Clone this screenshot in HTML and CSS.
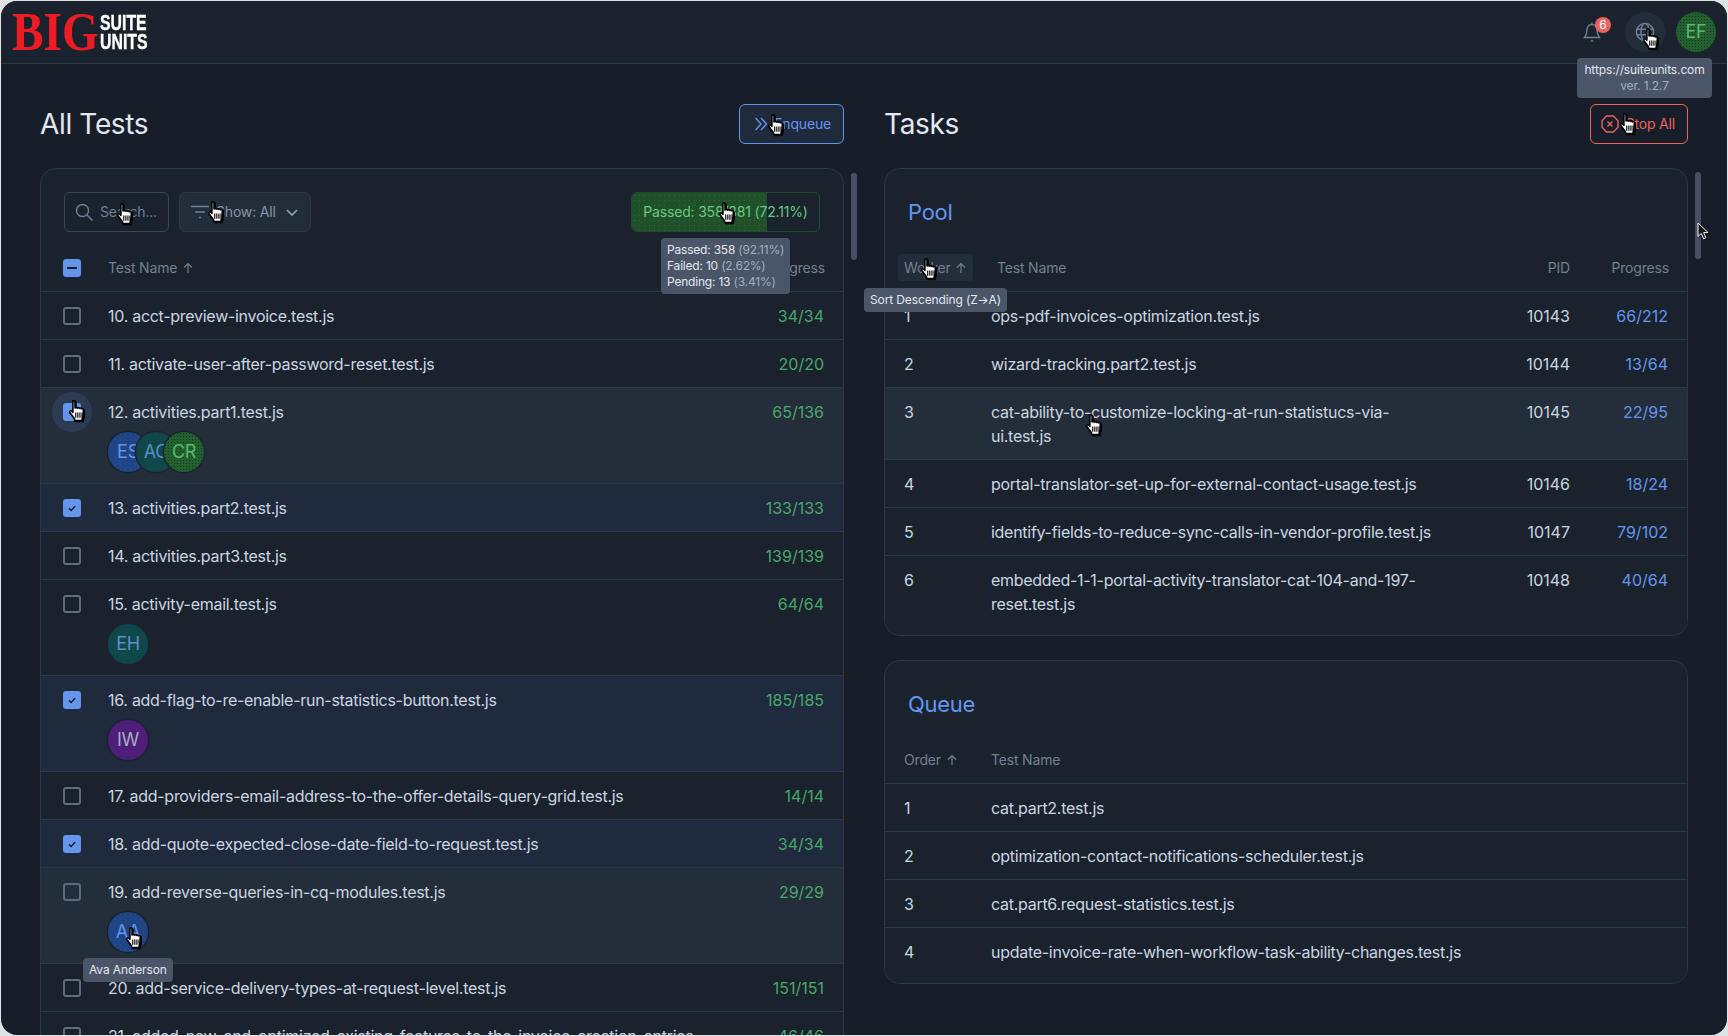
FILE: index.html
```html
<!DOCTYPE html>
<html lang="en">
<head>
<meta charset="utf-8">
<title>Big Suite Units</title>
<link rel="stylesheet" href="styles.css">
</head>
<body>
<svg class="defs" width="0" height="0" aria-hidden="true">
  <defs>
    <symbol id="hand" viewBox="0 0 17 21">
      <path d="M4.600 1.600c0-1.200 2-1.200 2 0v6.100c.2-1 1.900-1 2 .1.300-.9 1.900-.8 2 .3.400-.8 1.900-.6 2 .4.400-.6 1.900-.4 1.900.8v4.500c0 2-.6 2.900-1.100 4.200v1.600H6.200v-1.600C5 16.300 3.600 14.600 2 12.400.9 10.900 2.300 9.600 3.500 10.700l1.100 1.100z" fill="#fff" stroke="#000" stroke-width="1.500" stroke-linejoin="round"/>
      <path d="M7.300 12v5M9.300 12v5M11.300 12v5M13.300 12v5" stroke="#000" stroke-width="1.100"/>
    </symbol>
    <symbol id="up" viewBox="0 0 12 12">
      <path d="M6 11V1.500M2 5.500l4-4 4 4" fill="none" stroke="currentColor" stroke-width="1.200"/>
    </symbol>
    <symbol id="tick" viewBox="0 0 18 18">
      <path d="M5 9.500l3 2.800 5-6" fill="none" stroke="#1a202c" stroke-width="1.800"/>
    </symbol>
  </defs>
</svg>
<div class="window">
  <header class="topbar">
    <div class="logo">
      <span class="logo-big">BIG</span>
      <span class="logo-small"><span>SUITE</span><span>UNITS</span></span>
    </div>
    <div class="top-actions">
      <div class="bell">
        <svg width="20" height="24" viewBox="0 0 20 24" fill="none" stroke="#718096" stroke-width="1.400"><path d="M10 2.500v2M10 4.500c-3.200 0-5 2.600-5 5.500 0 4-1 5.500-2.500 7.500h15c-1.500-2-2.500-3.500-2.500-7.500 0-2.900-1.800-5.500-5-5.500z"/><path d="M8.800 21h2.400"/></svg>
        <span class="badge">6</span>
      </div>
      <div class="globe">
        <svg width="20" height="20" viewBox="0 0 22 22" fill="none" stroke="#718096" stroke-width="1.500"><circle cx="11" cy="11" r="9.500"/><ellipse cx="11" cy="11" rx="4.500" ry="9.500"/><path d="M2 8h18M2 14h18"/></svg>
      </div>
      <div class="avatar av-green dots-dark">EF</div>
    </div>
  </header>

  <main class="columns">
    <section class="column">
      <div class="col-head">
        <h1>All Tests</h1>
        <button class="btn btn-blue">
          <svg width="14" height="14" viewBox="0 0 14 14" fill="none" stroke="currentColor" stroke-width="1.400"><path d="M1.500 1L7 7l-5.500 6M7 1l5.500 6L7 13"/></svg>
          Enqueue
        </button>
      </div>
      <div class="panel">
        <div class="toolbar">
          <div class="search">
            <svg width="18" height="18" viewBox="0 0 18 18" fill="none" stroke="#718096" stroke-width="1.400"><circle cx="7.500" cy="7.500" r="6"/><path d="M12 12l5.500 5.500"/></svg>
            <span>Search...</span>
          </div>
          <div class="filter">
            <svg width="18" height="14" viewBox="0 0 18 14" fill="none" stroke="#718096" stroke-width="1.400"><path d="M0 1.500h18M4 7h10M8 12.500h2"/></svg>
            <span>Show: All</span>
            <svg width="14" height="14" viewBox="0 0 14 14" fill="none" stroke="#a0aec0" stroke-width="1.500"><path d="M2 5l5 5 5-5"/></svg>
          </div>
          <div class="stat">
            <div class="stat-fill" style="width:72.11%"></div>
            <span class="stat-text">Passed: 358/381 (72.11%)</span>
          </div>
        </div>
        <div class="thead thead-tests">
          <span class="check on"><i class="minus"></i></span>
          <span class="th">Test Name <svg class="up" width="12" height="12"><use href="#up"/></svg></span>
          <span class="th th-right">Progress</span>
        </div>
        <div class="row row-tests"><span class="check"></span><div class="cell-name">10. acct-preview-invoice.test.js</div><span class="done">34/34</span></div>
        <div class="row row-tests"><span class="check"></span><div class="cell-name">11. activate-user-after-password-reset.test.js</div><span class="done">20/20</span></div>
        <div class="row row-tests hover">
          <span class="check on halo"><svg width="16" height="16"><use href="#tick"/></svg></span>
          <div class="cell-name">12. activities.part1.test.js
            <div class="avatars"><span class="avatar av-blue dots-light">ES</span><span class="avatar av-teal">AC</span><span class="avatar av-green dots-dark">CR</span></div>
          </div>
          <span class="done">65/136</span>
        </div>
        <div class="row row-tests selected"><span class="check on"><svg width="16" height="16"><use href="#tick"/></svg></span><div class="cell-name">13. activities.part2.test.js</div><span class="done">133/133</span></div>
        <div class="row row-tests"><span class="check"></span><div class="cell-name">14. activities.part3.test.js</div><span class="done">139/139</span></div>
        <div class="row row-tests"><span class="check"></span>
          <div class="cell-name">15. activity-email.test.js
            <div class="avatars"><span class="avatar av-teal">EH</span></div>
          </div>
          <span class="done">64/64</span>
        </div>
        <div class="row row-tests selected"><span class="check on"><svg width="16" height="16"><use href="#tick"/></svg></span>
          <div class="cell-name">16. add-flag-to-re-enable-run-statistics-button.test.js
            <div class="avatars"><span class="avatar av-purple">IW</span></div>
          </div>
          <span class="done">185/185</span>
        </div>
        <div class="row row-tests"><span class="check"></span><div class="cell-name">17. add-providers-email-address-to-the-offer-details-query-grid.test.js</div><span class="done">14/14</span></div>
        <div class="row row-tests selected"><span class="check on"><svg width="16" height="16"><use href="#tick"/></svg></span><div class="cell-name">18. add-quote-expected-close-date-field-to-request.test.js</div><span class="done">34/34</span></div>
        <div class="row row-tests hover"><span class="check"></span>
          <div class="cell-name">19. add-reverse-queries-in-cq-modules.test.js
            <div class="avatars"><span class="avatar av-blue dots-light">AA</span></div>
          </div>
          <span class="done">29/29</span>
        </div>
        <div class="row row-tests"><span class="check"></span><div class="cell-name">20. add-service-delivery-types-at-request-level.test.js</div><span class="done">151/151</span></div>
        <div class="row row-tests"><span class="check"></span><div class="cell-name">21. added-new-and-optimized-existing-features-to-the-invoice-creation-entries</div><span class="done">46/46</span></div>
      </div>
    </section>

    <section class="column">
      <div class="col-head">
        <h1>Tasks</h1>
        <button class="btn btn-red">
          <svg width="18" height="18" viewBox="0 0 18 18" fill="none" stroke="currentColor" stroke-width="1.400"><path d="M5.700 1h6.600L17 5.700v6.600L12.300 17H5.700L1 12.300V5.700z"/><path d="M6.500 6.500l5 5M11.500 6.500l-5 5"/></svg>
          Stop All
        </button>
      </div>
      <div class="panel panel-spaced">
        <h2>Pool</h2>
        <div class="thead thead-pool">
          <span class="sort sort-hover">Worker <svg class="up" width="12" height="12"><use href="#up"/></svg></span>
          <span class="sort">Test Name</span>
          <span class="th th-right">PID</span>
          <span class="th th-right">Progress</span>
        </div>
        <div class="row row-pool"><span>1</span><div>ops-pdf-invoices-optimization.test.js</div><span class="pid">10143</span><span class="running">66/212</span></div>
        <div class="row row-pool"><span>2</span><div>wizard-tracking.part2.test.js</div><span class="pid">10144</span><span class="running">13/64</span></div>
        <div class="row row-pool hover"><span>3</span><div>cat-ability-to-customize-locking-at-run-statistucs-via-ui.test.js</div><span class="pid">10145</span><span class="running">22/95</span></div>
        <div class="row row-pool"><span>4</span><div>portal-translator-set-up-for-external-contact-usage.test.js</div><span class="pid">10146</span><span class="running">18/24</span></div>
        <div class="row row-pool"><span>5</span><div>identify-fields-to-reduce-sync-calls-in-vendor-profile.test.js</div><span class="pid">10147</span><span class="running">79/102</span></div>
        <div class="row row-pool last"><span>6</span><div>embedded-1-1-portal-activity-translator-cat-104-and-197-reset.test.js</div><span class="pid">10148</span><span class="running">40/64</span></div>
      </div>
      <div class="panel">
        <h2>Queue</h2>
        <div class="thead thead-queue">
          <span class="th">Order <svg class="up" width="12" height="12"><use href="#up"/></svg></span>
          <span class="sort">Test Name</span>
        </div>
        <div class="row row-queue"><span>1</span><div>cat.part2.test.js</div></div>
        <div class="row row-queue"><span>2</span><div>optimization-contact-notifications-scheduler.test.js</div></div>
        <div class="row row-queue"><span>3</span><div>cat.part6.request-statistics.test.js</div></div>
        <div class="row row-queue last"><span>4</span><div>update-invoice-rate-when-workflow-task-ability-changes.test.js</div></div>
      </div>
    </section>
  </main>

  <div class="scrollbar sb-left"></div>
  <div class="scrollbar sb-right"></div>

  <div class="tip tip-site">https://suiteunits.com<br><span class="mute">ver. 1.2.7</span></div>
  <div class="tip tip-stats">Passed: 358 <span class="mute">(92.11%)</span><br>Failed: 10 <span class="mute">(2.62%)</span><br>Pending: 13 <span class="mute">(3.41%)</span></div>
  <div class="tip tip-sort">Sort Descending (Z→A)</div>
  <div class="tip tip-ava">Ava Anderson</div>

  <svg class="cursor c1" width="18" height="22" viewBox="0 0 17 21"><use href="#hand"/></svg>
  <svg class="cursor c2" width="18" height="22" viewBox="0 0 17 21"><use href="#hand"/></svg>
  <svg class="cursor c3" width="18" height="22" viewBox="0 0 17 21"><use href="#hand"/></svg>
  <svg class="cursor c4" width="18" height="22" viewBox="0 0 17 21"><use href="#hand"/></svg>
  <svg class="cursor c5" width="18" height="22" viewBox="0 0 17 21"><use href="#hand"/></svg>
  <svg class="cursor c6" width="18" height="22" viewBox="0 0 17 21"><use href="#hand"/></svg>
  <svg class="cursor c7" width="18" height="22" viewBox="0 0 17 21"><use href="#hand"/></svg>
  <svg class="cursor c8" width="18" height="22" viewBox="0 0 17 21"><use href="#hand"/></svg>
  <svg class="cursor c9" width="18" height="22" viewBox="0 0 17 21"><use href="#hand"/></svg>
  <svg class="cursor c10" width="18" height="22" viewBox="0 0 17 21"><use href="#hand"/></svg>
  <svg class="cursor c11" width="12" height="18" viewBox="0 0 12 18"><path d="M1 1v13.500l3.300-3 2.300 5.300 2.300-1-2.300-5.200h4.500z" fill="#14181f" stroke="#fff" stroke-width="1"/></svg>
</div>
</body>
</html>
```

FILE: styles.css
```css
* { box-sizing: border-box; }
html, body { margin: 0; height: 100%; }
body {
  padding: 1px;
  background: #dfe2e6;
  overflow: hidden;
  font-family: Inter, "Liberation Sans", sans-serif;
  font-size: 16px;
  line-height: 24px;
  letter-spacing: -.28px;
  color: #cbd5e0;
}
.defs { position: absolute; }
.window {
  position: relative;
  height: 1034px;
  overflow: hidden;
  border-radius: 16px;
  background: #171e2a;
}

/* top bar */
.topbar {
  height: 63px;
  display: flex;
  align-items: center;
  justify-content: space-between;
  padding: 0 11px 0 11px;
  background: #1a222e;
  border-bottom: 1px solid #2d3748;
}
.logo { display: flex; align-items: center; height: 40px; }
.logo-big {
  width: 88px;
  font-family: "Liberation Serif", serif;
  font-weight: 700;
  font-size: 54px;
  letter-spacing: 0;
  line-height: 40px;
  color: #ed1c24;
  transform: scaleX(.875);
  transform-origin: left center;
}
.logo-small {
  display: flex;
  flex-direction: column;
  width: 50px;
  font-family: "Liberation Sans", sans-serif;
  font-weight: 700;
  font-size: 22px;
  letter-spacing: 0;
  line-height: 19px;
  color: #fff;
  -webkit-text-stroke: .4px #fff;
  transform: scaleX(.72);
  transform-origin: left center;
}
.top-actions { display: flex; align-items: center; gap: 11px; }
.bell { position: relative; width: 40px; height: 40px; margin-right: 2px; display: flex; align-items: center; justify-content: center; }
.badge {
  position: absolute;
  top: 5px;
  right: 1px;
  width: 16px;
  height: 16px;
  border-radius: 50%;
  background: #e8645f;
  color: #fff;
  font-size: 12px;
  line-height: 16px;
  letter-spacing: 0;
  text-align: center;
}
.globe {
  width: 40px;
  height: 40px;
  border-radius: 50%;
  background: #232c39;
  display: flex;
  align-items: center;
  justify-content: center;
}

/* avatars */
.avatar {
  width: 40px;
  height: 40px;
  flex: none;
  border-radius: 50%;
  display: inline-flex;
  align-items: center;
  justify-content: center;
  font-size: 18px;
  overflow: hidden;
}
.av-green { background-color: #23602f; color: #58b96f; }
.av-blue { background-color: #1f4585; color: #6495ed; }
.av-teal { background-color: #10474a; color: #5a90c8; }
.av-purple { background-color: #4d1f78; color: #a5afc0; }
.dots-dark { background-image: radial-gradient(circle, #143a1c 35%, transparent 40%); background-size: 3px 3px; }
.dots-light { background-image: radial-gradient(circle, #2a5090 22%, transparent 27%); background-size: 5px 5px; }
.avatars { display: flex; margin-top: 8px; height: 40px; }
.avatars .avatar { margin-right: -12px; box-shadow: 0 0 0 1.500px #1c2431; }

/* columns */
.columns {
  display: flex;
  gap: 40px;
  padding: 40px 39px 0;
}
.column { flex: 1 1 0; min-width: 0; }
.col-head {
  height: 40px;
  margin-bottom: 24px;
  display: flex;
  align-items: center;
  justify-content: space-between;
}
h1 {
  margin: 0;
  font-size: 28px;
  font-weight: 400;
  letter-spacing: -.35px;
  line-height: 40px;
  color: #e2e8f0;
}
.btn {
  height: 40px;
  display: flex;
  align-items: center;
  border-radius: 6px;
  font: inherit;
  font-size: 14px;
  letter-spacing: -.18px;
  background: transparent;
}
.btn-blue { width: 105px; padding: 0 12px 0 14px; justify-content: space-between; color: #6495ed; border: 1px solid #6495ed; background: #1f2a3d; }
.btn-red { width: 98px; padding: 0 12px 0 10px; justify-content: space-between; color: #e8645f; border: 1px solid #e8645f; background: transparent; }

.panel {
  background: #1a222e;
  border: 1px solid #2d3748;
  border-radius: 16px;
  overflow: hidden;
}
.panel-spaced { margin-bottom: 24px; }
.toolbar {
  display: flex;
  align-items: stretch;
  height: 40px;
  margin: 23px 23px 12px;
  gap: 10px;
  font-size: 14px;
  letter-spacing: -.18px;
  color: #718096;
}
.search, .filter {
  display: flex;
  align-items: center;
  border-radius: 6px;
  border: 1px solid #3b4657;
}
.search { width: 105px; padding: 0 10px; gap: 7px; overflow: hidden; white-space: nowrap; }
.filter { width: 132px; padding: 0 11px; gap: 7px; background: #232c39; border-color: #2d3748; white-space: nowrap; color: #8794a8; }
.filter span { flex: 1; }
.stat {
  position: relative;
  width: 189px;
  margin-left: auto;
  border: 1px solid #1f4d2c;
  border-radius: 6px;
  overflow: hidden;
  display: flex;
  align-items: center;
  justify-content: center;
  color: #68c983;
  white-space: nowrap;
}
.stat-fill {
  position: absolute;
  left: 0;
  top: 0;
  bottom: 0;
  background-color: #1f5029;
  background-image: radial-gradient(circle, #2f6a3b 18%, transparent 24%);
  background-size: 5px 5px;
}
.stat-text { position: relative; }

.thead {
  display: grid;
  align-items: center;
  height: 48px;
  border-bottom: 1px solid #2d3748;
  font-size: 14px;
  letter-spacing: -.18px;
  color: #74808f;
}
.up { vertical-align: -1px; margin-left: 1px; }
.th-right { text-align: right; }
.sort { padding: 3px 6px; width: max-content; line-height: 21px; }
.sort-hover { background: #232c39; border-radius: 4px; }

.thead-tests { grid-template-columns: 45px 1fr 120px; padding: 0 18px 0 22px; }
.thead-pool { grid-template-columns: 93px 1fr 100px 99px; padding: 0 18px 0 13px; }
.thead-queue { grid-template-columns: 81px 1fr; padding: 0 18px 0 19px; }
.panel h2 {
  margin: 23px 23px 12px;
  height: 40px;
  font-size: 22px;
  font-weight: 400;
  letter-spacing: -.3px;
  line-height: 40px;
  color: #6495ed;
}

.row {
  display: grid;
  padding: 12px 19px 11px 19px;
  border-bottom: 1px solid #2d3748;
  align-items: start;
  background: #1a222e;
}
.row:last-child { border-bottom: 0; }
.row.last { padding-bottom: 19px; }
.row.hover { background: #242d3a; }
.row.selected { background: #1f2a3d; }
.row-tests { grid-template-columns: 45px 1fr 120px; padding-left: 22px; }
.row-tests .done, .running { text-align: right; }
.cell-name { white-space: nowrap; }
.row-pool { grid-template-columns: 87px 454px 1fr 98px; }
.row-queue { grid-template-columns: 87px 1fr; }
.pid { text-align: right; letter-spacing: 0; }
.done { color: #48a868; letter-spacing: 0; }
.running { color: #6495ed; letter-spacing: 0; }

.check {
  position: relative;
  width: 18px;
  height: 18px;
  margin-top: 3px;
  border: 2px solid #5f6c7e;
  border-radius: 3px;
  display: flex;
  align-items: center;
  justify-content: center;
}
.thead .check { margin-top: 0; }
.check.on { background: #6495ed; border-color: #6495ed; }
.minus { width: 10px; height: 2px; background: #1a202c; }
.halo::before {
  content: "";
  position: absolute;
  left: -13px;
  top: -13px;
  width: 40px;
  height: 40px;
  border-radius: 50%;
  background: rgba(100, 149, 237, .14);
}

/* scrollbars */
.scrollbar {
  position: absolute;
  width: 6px;
  height: 87px;
  border-radius: 3px;
  background: #465164;
}
.sb-left { left: 850px; top: 172px; }
.sb-right { left: 1694px; top: 171px; }

/* tooltips */
.tip {
  position: absolute;
  background: #4a5568;
  border-radius: 4px;
  font-size: 12px;
  line-height: 16px;
  letter-spacing: -.12px;
  padding: 4px 6px;
  color: #e2e8f0;
  white-space: nowrap;
  z-index: 2;
}
.mute { color: #a0aec0; }
.tip-site { left: 1576px; top: 57px; width: 135px; padding: 4px; text-align: center; }
.tip-stats { left: 660px; top: 237px; width: 129px; letter-spacing: -.2px; }
.tip-sort { left: 863px; top: 287px; }
.tip-ava { left: 82px; top: 957px; }

/* captured pointer positions */
.cursor { position: absolute; z-index: 3; filter: drop-shadow(1px 1px 0 #000); }
.c1 { left: 766px; top: 113px; }
.c2 { left: 1618px; top: 112px; }
.c3 { left: 1641px; top: 27px; }
.c4 { left: 115px; top: 202px; }
.c5 { left: 206px; top: 200px; }
.c6 { left: 717px; top: 201px; }
.c7 { left: 919px; top: 257px; }
.c8 { left: 67px; top: 399px; }
.c9 { left: 1084px; top: 413px; }
.c10 { left: 124px; top: 926px; }
.c11 { left: 1696px; top: 221px; }
```
